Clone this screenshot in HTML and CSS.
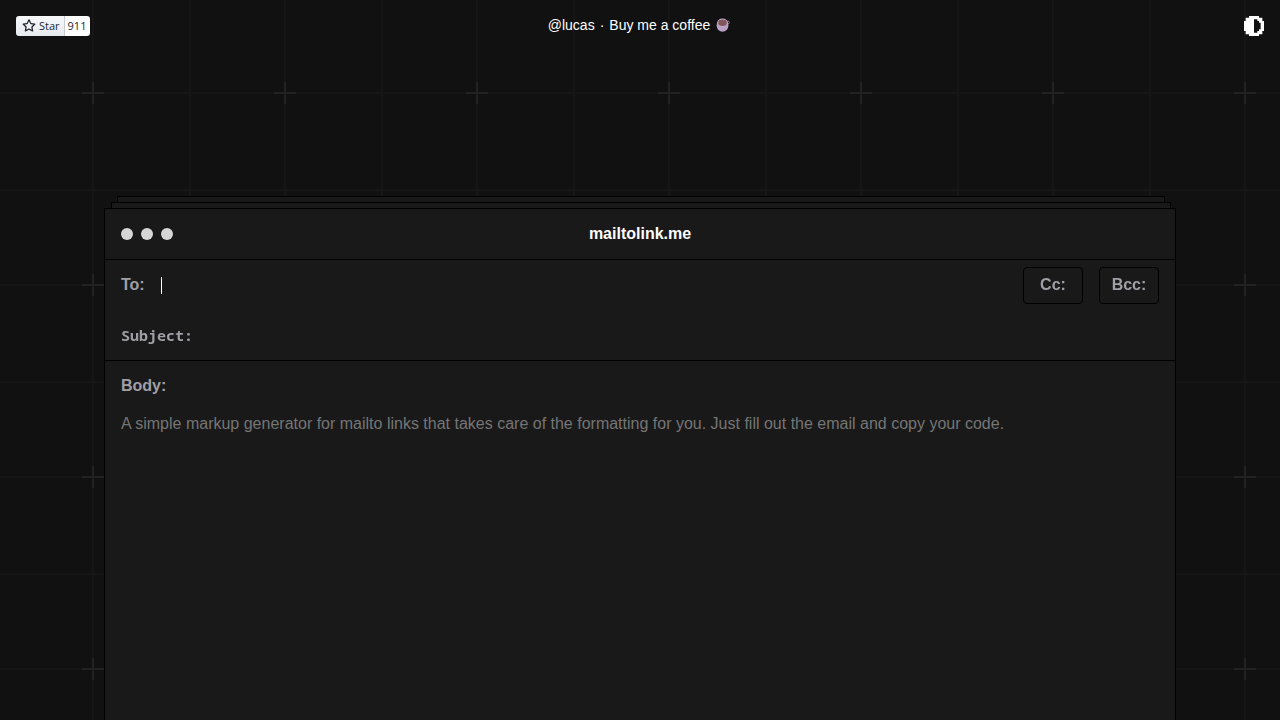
FILE: index.html
```html
<!DOCTYPE html>
<html lang="en">
<head>
    <meta charset="UTF-8">
    <meta name="viewport" content="width=device-width, initial-scale=1.0">
    <title>mailtolink.me</title>
    <link rel="stylesheet" href="styles.css">
</head>
<body>
    <svg class="grid" aria-hidden="true">
        <defs>
            <pattern id="tile" width="192" height="192" patternUnits="userSpaceOnUse">
                <path class="grid-line" d="M92 0h2v192h-2zM189 0h2v192h-2zM0 92h192v2H0zM0 189h192v2H0z"/>
                <path class="grid-cross" d="M92 82h2v22h-2zM82 92h22v2H82z"/>
            </pattern>
        </defs>
        <rect width="100%" height="100%" fill="url(#tile)"/>
    </svg>

    <header class="topbar">
        <div class="github">
            <a class="github-star" href="#">
                <svg viewBox="0 0 16 16" width="14" height="14" aria-hidden="true">
                    <path d="M8 .25a.75.75 0 0 1 .673.418l1.882 3.815 4.21.612a.75.75 0 0 1 .416 1.279l-3.046 2.97.719 4.192a.751.751 0 0 1-1.088.791L8 12.347l-3.766 1.98a.75.75 0 0 1-1.088-.79l.72-4.194L.818 6.374a.75.75 0 0 1 .416-1.28l4.21-.611L7.327.668A.75.75 0 0 1 8 .25Zm0 2.445L6.615 5.5a.75.75 0 0 1-.564.41l-3.097.45 2.24 2.184a.75.75 0 0 1 .216.664l-.528 3.084 2.769-1.456a.75.75 0 0 1 .698 0l2.77 1.456-.53-3.084a.75.75 0 0 1 .216-.664l2.24-2.183-3.096-.45a.75.75 0 0 1-.564-.41L8 2.694Z"/>
                </svg>
                Star
            </a>
            <a class="github-count" href="#">911</a>
        </div>
        <nav class="links">
            <a href="#">@lucas</a>
            <span>·</span>
            <a class="coffee" href="#">
                Buy me a coffee
                <svg viewBox="0 0 14 14" width="14" height="14" aria-hidden="true">
                    <circle cx="12" cy="4.500" r="1.400" fill="none" stroke="#8d789c" stroke-width="1"/>
                    <ellipse cx="6.500" cy="7.500" rx="5.900" ry="6.200" fill="#b9a0c4"/>
                    <ellipse cx="6.500" cy="4.500" rx="5.200" ry="4" fill="#c9b3d1"/>
                    <ellipse cx="6.500" cy="4.700" rx="4.400" ry="3.200" fill="#80565a"/>
                </svg>
            </a>
        </nav>
        <button class="theme" type="button" aria-label="Toggle theme">
            <svg viewBox="0 0 12 12" width="20" height="20" aria-hidden="true">
                <path fill="#fff" fill-rule="evenodd" d="M3 0h6v1h2v2h1v6h-1v2H9v1H3v-1H1V9H0V3h1V1h2zM6 2v8h2V9h1V8h1V4H9V3H8V2z"/>
            </svg>
        </button>
    </header>

    <main class="stack">
        <div class="sheet sheet-back"></div>
        <div class="sheet sheet-middle"></div>
        <form class="window">
            <div class="titlebar">
                <div class="dots">
                    <span class="dot"></span>
                    <span class="dot"></span>
                    <span class="dot"></span>
                </div>
                <h1>mailtolink.me</h1>
            </div>
            <div class="fields">
                <div class="row">
                    <label for="to">To:</label>
                    <div class="entry">
                        <span class="caret"></span>
                        <input id="to" type="email" autofocus>
                    </div>
                    <button class="copy-btn" type="button">Cc:</button>
                    <button class="copy-btn" type="button">Bcc:</button>
                </div>
                <div class="row">
                    <label class="mono" for="subject">Subject:</label>
                    <div class="entry">
                        <input id="subject" type="text">
                    </div>
                </div>
            </div>
            <div class="message">
                <label for="body">Body:</label>
                <textarea id="body" placeholder="A simple markup generator for mailto links that takes care of the formatting for you. Just fill out the email and copy your code."></textarea>
            </div>
        </form>
    </main>
</body>
</html>
```
FILE: styles.css
```css
* {
    margin: 0;
    padding: 0;
    box-sizing: border-box;
}

body {
    height: 100vh;
    overflow: hidden;
    display: flex;
    flex-direction: column;
    background-color: #111;
    color: #fff;
    font-family: "Liberation Sans", Arial, sans-serif;
    font-size: 16px;
}

a {
    color: inherit;
    text-decoration: none;
}

button,
input,
textarea {
    font: inherit;
    color: inherit;
    background: none;
    border: none;
    outline: none;
}

/* background grid */
.grid {
    position: absolute;
    inset: 0;
    width: 100%;
    height: 100%;
    z-index: -1;
}

.grid-line {
    fill: #161616;
}

.grid-cross {
    fill: #222;
}

/* top bar */
.topbar {
    display: grid;
    grid-template-columns: 1fr auto 1fr;
    align-items: center;
    height: 52px;
    padding: 0 16px;
}

.github {
    display: flex;
    justify-self: start;
    height: 20px;
    border-radius: 3px;
    overflow: hidden;
    color: #24292f;
    font-family: "Open Sans", sans-serif;
    font-size: 11px;
    line-height: 20px;
}

.github-star {
    display: flex;
    align-items: center;
    gap: 3px;
    padding: 0 4px 0 6px;
    background-image: linear-gradient(#f6f8fa, #e6ebf1);
    border-right: 1px solid #c8ccd1;
}

.github-star svg {
    fill: #24292f;
}

.github-count {
    padding: 0 4px 0 3px;
    background-color: #fff;
}

.links {
    display: flex;
    gap: 5px;
    padding: 0 2px 2px 0;
    font-size: 14px;
}

.coffee {
    display: flex;
    align-items: center;
    gap: 6px;
}

.theme {
    display: flex;
    justify-self: end;
    cursor: pointer;
}

/* stacked window */
.stack {
    flex: 1;
    display: flex;
    flex-direction: column;
    margin: 144px 104px 0;
}

.sheet {
    height: 6px;
    background-color: #191919;
    border: 1px solid #000;
    border-bottom: none;
}

.sheet-back {
    margin: 0 11px 0 13px;
}

.sheet-middle {
    margin: 0 5px 0 7px;
}

.window {
    flex: 1;
    display: flex;
    flex-direction: column;
    background-color: #191919;
    border: 1px solid #000;
    border-bottom: none;
}

.titlebar {
    display: grid;
    grid-template-columns: 1fr auto 1fr;
    align-items: center;
    height: 51px;
    padding: 0 16px;
    border-bottom: 1px solid #000;
}

.titlebar h1 {
    font-size: 16px;
}

.dots {
    display: flex;
    gap: 8px;
}

.dot {
    width: 12px;
    height: 12px;
    border-radius: 50%;
    background-color: #d6d6d6;
}

.fields {
    border-bottom: 1px solid #000;
}

.row {
    display: flex;
    align-items: center;
    gap: 16px;
    height: 50px;
    padding: 0 16px;
}

label {
    color: #a09fa6;
    font-weight: bold;
}

.mono {
    font-family: "Noto Sans Mono", "DejaVu Sans Mono", monospace;
    font-size: 15px;
    line-height: 18px;
}

.entry {
    flex: 1;
    display: flex;
    align-items: center;
}

.entry input {
    flex: 1;
    min-width: 0;
    caret-color: transparent;
}

.caret {
    width: 1px;
    height: 17px;
    background-color: #fff;
}

.copy-btn {
    width: 60px;
    height: 37px;
    border: 1px solid #000;
    border-radius: 4px;
    color: #a09fa6;
    font-weight: bold;
    cursor: pointer;
}

.message {
    flex: 1;
    display: flex;
    flex-direction: column;
    gap: 20px;
    padding: 16px 16px 0;
}

textarea {
    flex: 1;
    width: 100%;
    resize: none;
}

textarea::placeholder {
    color: #757575;
}
```
